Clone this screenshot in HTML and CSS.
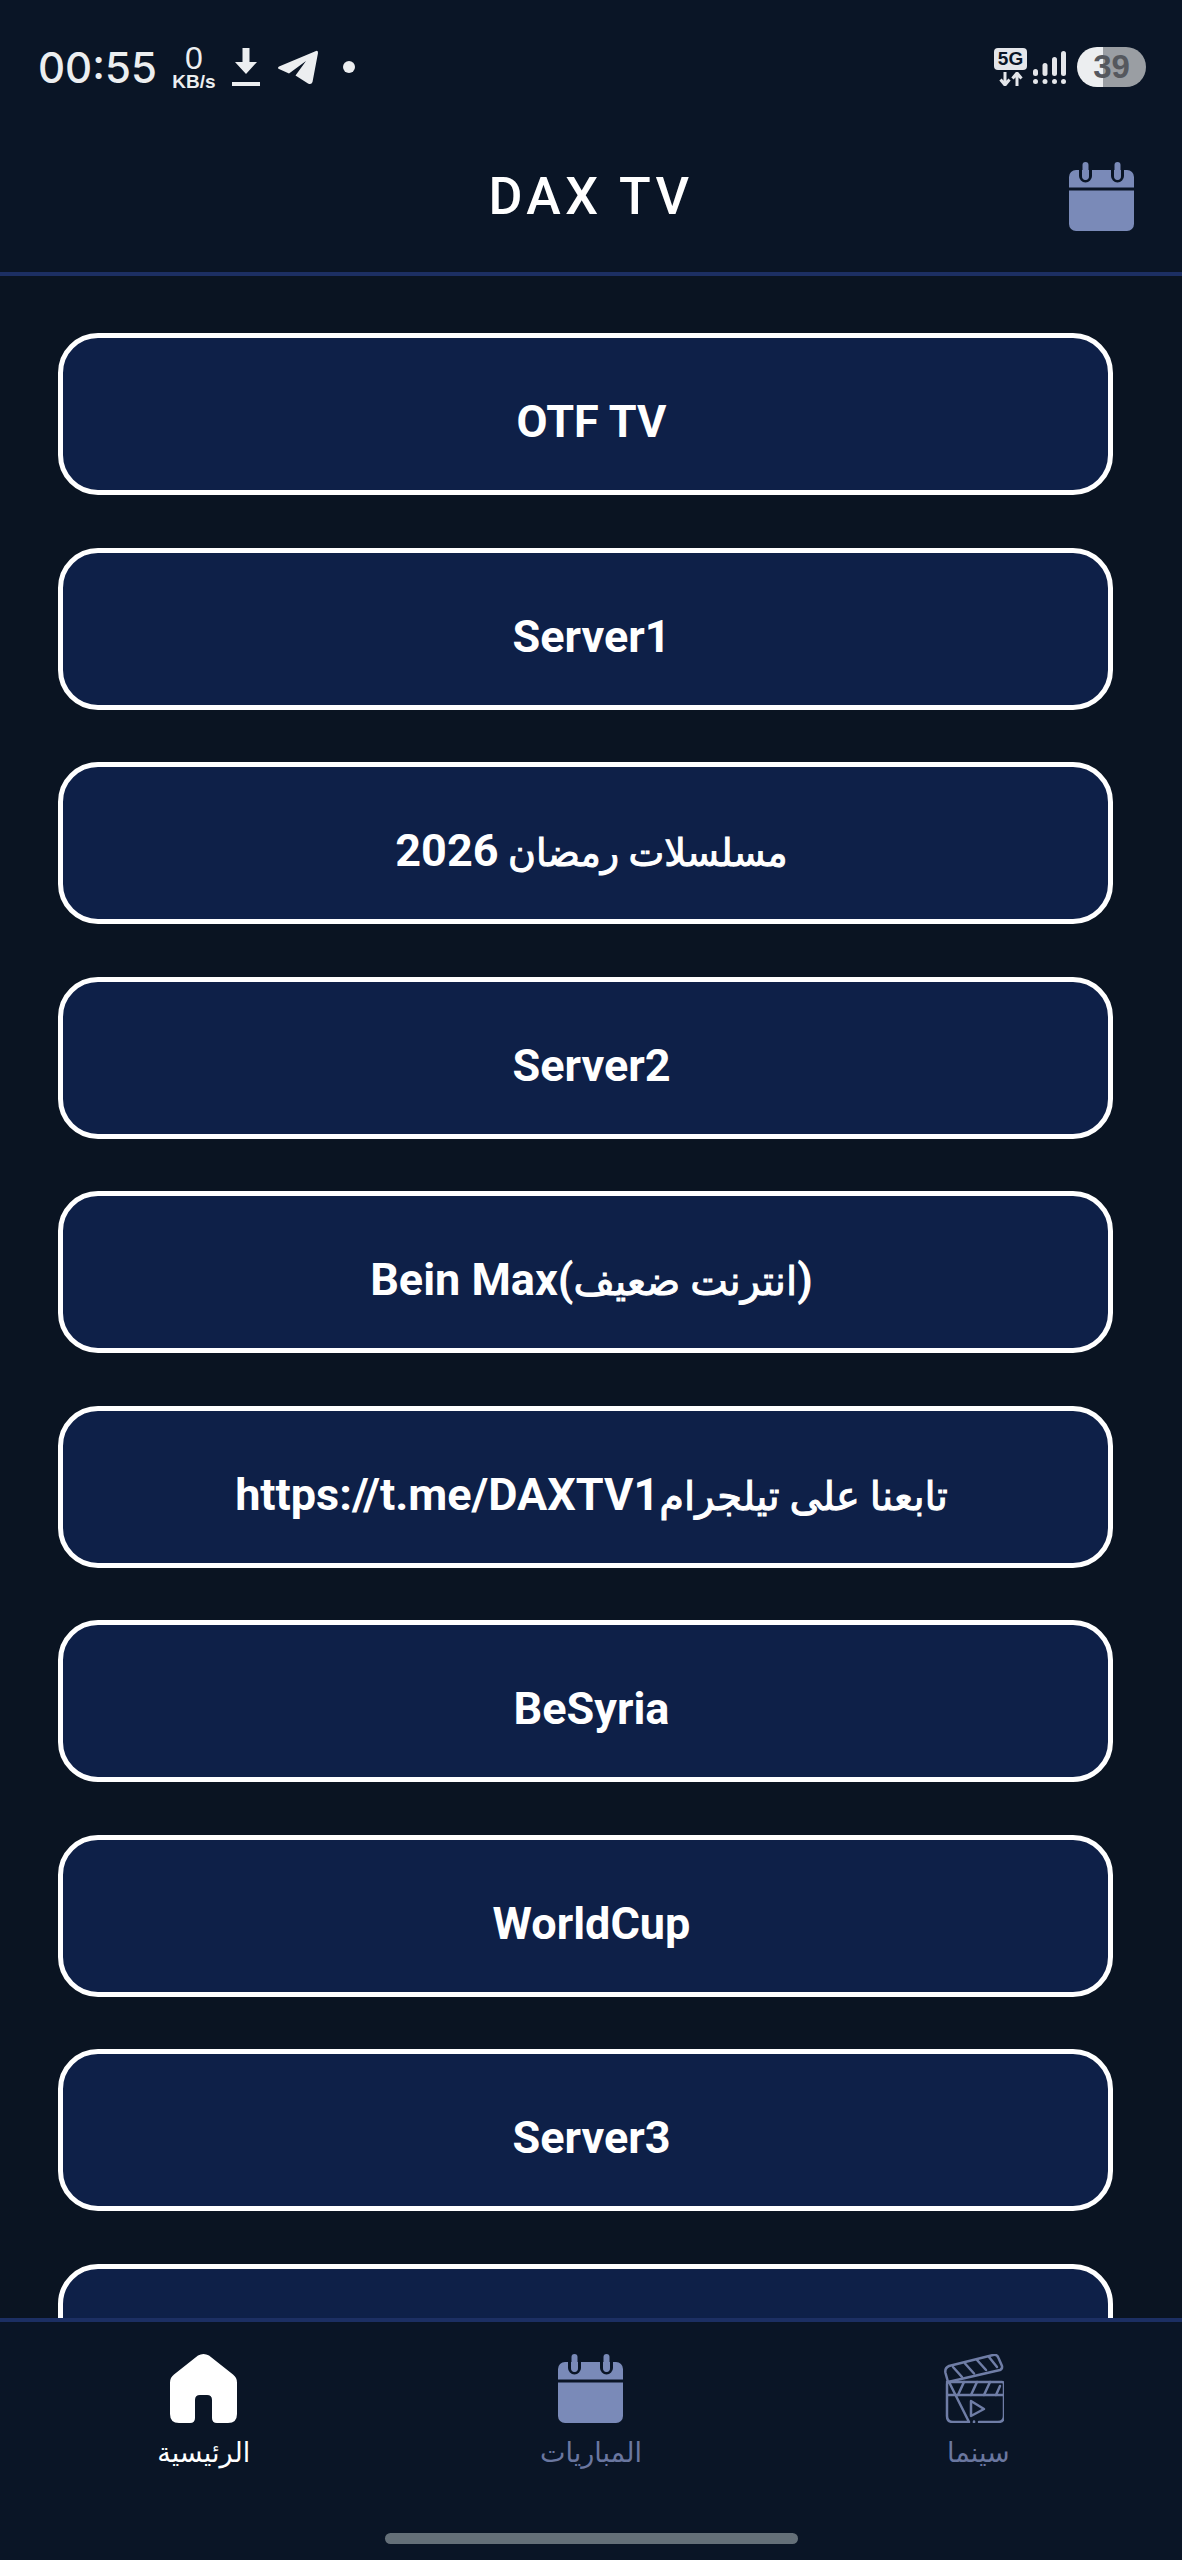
FILE: index.html
```html
<!DOCTYPE html>
<html lang="ar">
<head>
  <meta charset="UTF-8" />
  <meta name="viewport" content="width=device-width, initial-scale=1.0"/>
  <title>DAX TV</title>
  <link rel="stylesheet" href="styles.css">
</head>
<body>
  <div class="screen" dir="ltr">
    <header class="top">
      <!-- Status bar -->
      <div class="status">
        <div class="status-left">
          <span class="time">00:55</span>
          <span class="speed"><b>0</b><i>KB/s</i></span>
          <svg class="ic-download" viewBox="0 0 28 38"><path d="M10.500 0h7v14h7.500L14 26 3 14h7.500z"/><rect x="0" y="34" width="28" height="4"/></svg>
          <svg class="ic-telegram" viewBox="0 0 41 35"><path d="M39 1 2 16.500q-2 1.500 0 2.500l10 4.500L29 11 18.500 25.500 31 33.500q3.500 1.500 4.500-1.500L41 3q0-3-2-2z"/></svg>
          <span class="dot"></span>
        </div>
        <div class="status-right">
          <span class="net"><span class="net-label">5G</span>
            <svg class="ic-arrows" viewBox="0 0 24 14"><path d="M6 0v12M1.500 7.500 6 13l4.500-5.500M18 14V2M13.500 6.500 18 1l4.500 5.500"/></svg>
          </span>
          <svg class="ic-signal" viewBox="0 0 33 33">
            <rect x="0" y="18" width="5" height="7" rx="2.500"/><rect x="9.500" y="12" width="5" height="13" rx="2.500"/><rect x="19" y="6" width="5" height="19" rx="2.500"/><rect x="28" y="0" width="5" height="25" rx="2.500"/>
            <rect x="0" y="28" width="5" height="5" rx="2.500"/><rect x="9.500" y="28" width="5" height="5" rx="2.500"/><rect x="19" y="28" width="5" height="5" rx="2.500"/><rect x="28" y="28" width="5" height="5" rx="2.500"/>
          </svg>
          <span class="battery">39</span>
        </div>
      </div>
      <!-- App bar -->
      <div class="appbar">
        <span></span>
        <h1 class="title">DAX TV</h1>
        <svg class="ic-calendar" viewBox="0 0 65 69">
          <rect class="cal-body" x="0" y="8" width="65" height="61" rx="7"/>
          <path class="cal-line" d="M0 27h65"/>
          <path class="cal-line" d="M11.500 8v6a5 5 0 0 0 10 0V8M43.500 8v6a5 5 0 0 0 10 0V8"/>
          <rect class="cal-body" x="13.500" y="0" width="6" height="18" rx="3"/>
          <rect class="cal-body" x="45.500" y="0" width="6" height="18" rx="3"/>
        </svg>
      </div>
    </header>

    <main class="list">
      <a class="server"><span>OTF TV</span></a>
      <a class="server"><span>Server1</span></a>
      <a class="server"><span><span class="ar ar-small">مسلسلات رمضان </span>2026</span></a>
      <a class="server"><span>Server2</span></a>
      <a class="server"><span>Bein Max(<span class="ar">انترنت ضعيف</span>)</span></a>
      <a class="server"><span>https://t.me/DAXTV1<span class="ar">تابعنا على تيلجرام</span></span></a>
      <a class="server"><span>BeSyria</span></a>
      <a class="server"><span>WorldCup</span></a>
      <a class="server"><span>Server3</span></a>
      <a class="server"></a>
    </main>

    <nav class="bottom">
      <div class="tabs">
        <div class="tab active">
          <svg class="ic-home" viewBox="0 0 67 69"><path d="M28 1.500q5.500-3 11 0l24 19q4 3 4 8V60q0 9-9 9H47q-5 0-5-5V46q0-5-5-5h-7q-5 0-5 5v18q0 5-5 5H9q-9 0-9-9V28.500q0-5 4-8z"/></svg>
          <span>الرئيسية</span>
        </div>
        <div class="tab">
          <svg class="ic-calendar" viewBox="0 0 65 69">
            <rect class="cal-body" x="0" y="8" width="65" height="61" rx="7"/>
            <path class="cal-line" d="M0 27h65"/>
            <path class="cal-line" d="M11.500 8v6a5 5 0 0 0 10 0V8M43.500 8v6a5 5 0 0 0 10 0V8"/>
            <rect class="cal-body" x="13.500" y="0" width="6" height="18" rx="3"/>
            <rect class="cal-body" x="45.500" y="0" width="6" height="18" rx="3"/>
          </svg>
          <span>المباريات</span>
        </div>
        <div class="tab">
          <svg class="ic-cinema" viewBox="0 0 60 69">
            <path d="M4 28 1.500 19q-1-5 3.500-7L49 1q4-1 5.500 3L58 12q.5 3-2 4z"/>
            <path d="M9 13l9 10M21 9.500l9 10M33 6l9 10M45 3l8 10"/>
            <path d="M3 28h55q2 0 2 2v32q0 6-6 6H35M25 68H9q-6 0-6-6V30q0-2 2-2zM3 41h57"/>
            <path d="M14 41l6-13M27 41l6-13M40 41l6-13M52 41l4-9"/>
            <path d="M27 47l13 8-13 7z"/>
            <path d="M30 67.500v1"/>
          </svg>
          <span>سينما</span>
        </div>
      </div>
      <div class="home-bar"></div>
    </nav>
  </div>
</body>
</html>
```

FILE: styles.css
```css
* {
  box-sizing: border-box;
}

html, body {
  margin: 0;
  padding: 0;
  background-color: #0a1422;
}

.screen {
  display: flex;
  flex-direction: column;
  width: 1182px;
  height: 2560px;
  overflow: hidden;
  font-family: Roboto, "DejaVu Sans", sans-serif;
  color: white;
}

/* top */
.top {
  flex: none;
  height: 276px;
  background-color: #0a1526;
  border-bottom: 4px solid #1c2f63;
}

.status {
  display: flex;
  justify-content: space-between;
  align-items: center;
  height: 134px;
  padding: 0 36px 0 38px;
  color: #eceef0;
}

.status-left, .status-right {
  display: flex;
  align-items: center;
}

.time {
  font-family: Inter, Roboto, sans-serif;
  font-size: 42px;
  font-weight: 500;
  width: 132px;
}

.speed {
  display: flex;
  flex-direction: column;
  align-items: center;
  width: 44px;
  margin: 0 16px 0 2px;
  font-family: "Liberation Sans", sans-serif;
}

.speed b {
  font-size: 32px;
  font-weight: 400;
  line-height: 28px;
}

.speed i {
  font-size: 19px;
  font-style: normal;
  font-weight: 700;
  line-height: 19px;
  white-space: nowrap;
}

.ic-download {
  width: 28px;
  height: 38px;
  fill: #eceef0;
  margin-right: 17px;
}

.ic-telegram {
  width: 41px;
  height: 35px;
  fill: #eceef0;
  margin-right: 25px;
}

.dot {
  width: 12px;
  height: 12px;
  border-radius: 50%;
  background-color: #eceef0;
}

.net {
  display: flex;
  flex-direction: column;
  align-items: center;
  width: 33px;
  margin-right: 6px;
}

.net-label {
  width: 33px;
  height: 22px;
  border-radius: 4px;
  background-color: #e4e6ea;
  color: #0a1526;
  font-family: "Liberation Sans", sans-serif;
  font-size: 19px;
  font-weight: 700;
  line-height: 22px;
  text-align: center;
}

.ic-arrows {
  width: 24px;
  height: 14px;
  margin-top: 2px;
  fill: none;
  stroke: #e4e6ea;
  stroke-width: 3;
}

.ic-signal {
  width: 33px;
  height: 33px;
  fill: #e4e6ea;
  margin-right: 11px;
}

.battery {
  width: 69px;
  height: 40px;
  border-radius: 20px;
  background: linear-gradient(90deg, #eceef0 26px, #9a9ea3 26px);
  color: #55585e;
  font-family: "Liberation Sans", sans-serif;
  font-size: 33px;
  font-weight: 700;
  line-height: 40px;
  text-align: center;
}

.appbar {
  display: grid;
  grid-template-columns: 1fr auto 1fr;
  align-items: center;
  height: 124px;
  padding: 0 48px;
}

.title {
  margin: 0;
  font-size: 52px;
  font-weight: 500;
  letter-spacing: 4.500px;
}

.ic-calendar {
  width: 65px;
  height: 69px;
  justify-self: end;
}

.cal-body {
  fill: #7a8ab8;
}

.cal-line {
  fill: none;
  stroke: #0a1526;
  stroke-width: 3;
}

/* list */
.list {
  flex: 1;
  min-height: 0;
  overflow: hidden;
  padding: 57px 69px 0 58px;
}

.server {
  display: flex;
  justify-content: center;
  align-items: center;
  height: 162px;
  margin-bottom: 52.500px;
  padding: 15px 0 0 12px;
  background-color: #0e2048;
  border: 5px solid white;
  border-radius: 40px;
  font-size: 45px;
  font-weight: 700;
  white-space: pre;
}

.ar {
  font-size: 40px;
  font-weight: 400;
  line-height: 1;
  -webkit-text-stroke: 1px white;
}

.ar-small {
  font-size: 38px;
}

/* bottom nav */
.bottom {
  flex: none;
  height: 242px;
  padding: 32px 10px 0;
  background-color: #0a1526;
  border-top: 4px solid #1c2f63;
}

.tabs {
  display: grid;
  grid-template-columns: repeat(3, 1fr);
}

.tab {
  display: flex;
  flex-direction: column;
  align-items: center;
  gap: 12px;
  color: #6a77a0;
  font-size: 27px;
  line-height: 36px;
}

.tab.active {
  color: white;
}

.tab .ic-calendar {
  justify-self: auto;
}

.ic-home {
  width: 67px;
  height: 69px;
  fill: white;
}

.ic-cinema {
  width: 60px;
  height: 69px;
  margin-right: 8px;
  fill: none;
  stroke: #6f7da6;
  stroke-width: 2.500;
  stroke-linejoin: round;
  stroke-linecap: round;
}

.home-bar {
  width: 413px;
  height: 11px;
  margin: 62px auto 0;
  border-radius: 6px;
  background-color: #646f78;
}
```
